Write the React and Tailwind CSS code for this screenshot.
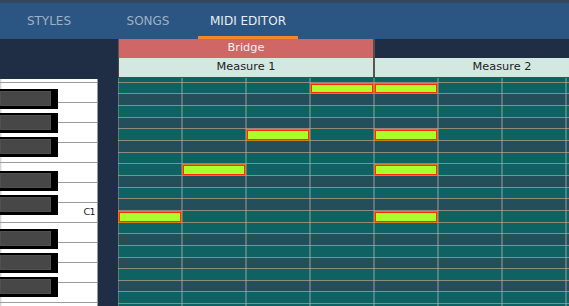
import React from "react";

const ROW_H = 11.667;
const BEAT_W = 64;

// piano roll rows from C2 (partly hidden) down to E0
const rows = [
  { name: "C2", black: false },
  { name: "B1", black: false },
  { name: "A#1", black: true },
  { name: "A1", black: false },
  { name: "G#1", black: true },
  { name: "G1", black: false },
  { name: "F#1", black: true },
  { name: "F1", black: false },
  { name: "E1", black: false },
  { name: "D#1", black: true },
  { name: "D1", black: false },
  { name: "C#1", black: true },
  { name: "C1", black: false },
  { name: "B0", black: false },
  { name: "A#0", black: true },
  { name: "A0", black: false },
  { name: "G#0", black: true },
  { name: "G0", black: false },
  { name: "F#0", black: true },
  { name: "F0", black: false },
  { name: "E0", black: false },
];

const notes = [
  { row: 1, beat: 3 },
  { row: 1, beat: 4 },
  { row: 5, beat: 2 },
  { row: 5, beat: 4 },
  { row: 8, beat: 1 },
  { row: 8, beat: 4 },
  { row: 12, beat: 0 },
  { row: 12, beat: 4 },
];

const whiteKeys = ["C2", "B1", "A1", "G1", "F1", "E1", "D1", "C1", "B0", "A0", "G0", "F0", "E0"];
const blackKeyTops = [10, 34, 58, 92, 116, 150, 174, 198];

const Tab = ({ label, active, width }) => (
  <div
    className={`flex h-full items-center justify-center border-b-[3px] pt-[3px] text-[12px] ${width} ${
      active ? "border-[#f28a26] text-[#e8eef4]" : "border-transparent text-[#9eb0c2]"
    }`}
  >
    {label}
  </div>
);

const Piano = () => (
  <div className="relative h-full w-[98px] border-r border-[#9a9a9a] bg-white shadow-[inset_2px_0_2px_-1px_#c8c8c8]">
    {whiteKeys.map((k, i) => (
      <div
        key={k}
        className={`flex items-center justify-end border-b border-[#9c9c9c] pr-[2px] ${i === 0 ? "h-[4px]" : "h-[20px]"}`}
      >
        {k === "C1" && <span className="text-[9.5px] tracking-[-0.6px] text-[#222]">C1</span>}
      </div>
    ))}
    {blackKeyTops.map((t) => (
      <div
        key={t}
        className="absolute left-0 h-[20px] w-[58px] bg-black pb-[3px] pr-[7px] pt-[2px]"
        style={{ top: t }}
      >
        <div className="h-full border border-[#505050] bg-[#474747]" />
      </div>
    ))}
  </div>
);

const Grid = () => (
  <div className="relative flex-1 overflow-hidden">
    {rows.map((r, i) => (
      <div
        key={r.name}
        className={`box-border border-b border-[#8e8b7b] ${r.black ? "bg-[#244e59]" : "bg-[#0f6262]"}`}
        style={{ height: i === 0 ? 4.67 : ROW_H }}
      />
    ))}
    <div className="absolute inset-0 flex -translate-x-px">
      {Array.from({ length: 8 }).map((_, i) => (
        <div key={i} className="h-full w-[64px] shrink-0 border-l-2 border-[#b4b4b4]/40" />
      ))}
    </div>
    {notes.map((n, i) => (
      <div
        key={i}
        className="absolute box-border border border-[#ff2c00] bg-[#aaff2a] shadow-[0_0_0_1px_#d6801c]"
        style={{
          top: 4.67 + (n.row - 1) * ROW_H + 1,
          left: n.beat * BEAT_W + 1,
          width: BEAT_W - 2,
          height: ROW_H - 2,
        }}
      />
    ))}
  </div>
);

export default function App() {
  return (
    <div className="flex h-[306px] w-full flex-col overflow-hidden bg-[#1f2e44] font-['DejaVu_Sans',sans-serif]">
      <header className="h-[39px] shrink-0 border-t-[3px] border-[#33475c] bg-[#2b5683]">
        <div className="flex h-full">
          <Tab label="STYLES" width="w-[98px]" />
          <Tab label="SONGS" width="w-[100px]" />
          <Tab label="MIDI EDITOR" width="w-[100px]" active />
        </div>
      </header>

      <div className="flex min-h-0 flex-1">
        <div className="flex w-[118px] shrink-0 flex-col">
          <div className="h-[40px] shrink-0" />
          <Piano />
        </div>

        <div className="flex min-w-0 flex-1 flex-col">
          <div className="flex h-[19px] shrink-0 border-l border-[#555]">
            <div className="flex w-[256px] shrink-0 items-center justify-center border-r-2 border-[#4f4f4f] bg-[#cf6767] text-[11.3px] text-[#f6f0f0]">
              Bridge
            </div>
          </div>
          <div className="flex h-[20px] shrink-0 border-b border-l border-[#4a4a4a] bg-[#d3e8e1] text-[11.3px] text-[#222]">
            <div className="flex w-[256px] shrink-0 items-center justify-center border-r-2 border-[#555]">Measure 1</div>
            <div className="flex w-[254px] shrink-0 items-center justify-center">Measure 2</div>
          </div>
          <Grid />
        </div>
      </div>
    </div>
  );
}
